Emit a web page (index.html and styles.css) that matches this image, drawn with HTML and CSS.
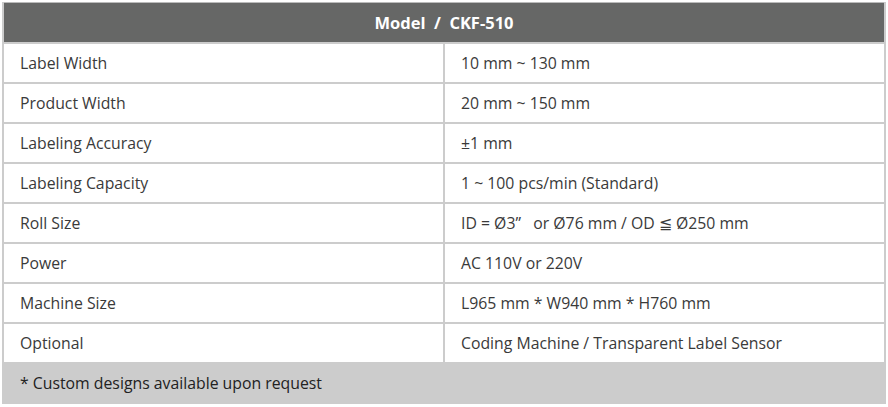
FILE: index.html
```html
<!DOCTYPE html>
<html>
<head>
<meta charset="utf-8">
<link rel="stylesheet" href="styles.css">
</head>
<body>
<div class="wrap">
<table class="spec">
  <thead>
    <tr><th colspan="2">Model&nbsp; / &nbsp;CKF-510</th></tr>
  </thead>
  <tbody>
    <tr><td>Label Width</td><td>10 mm ~ 130 mm</td></tr>
    <tr><td>Product Width</td><td>20 mm ~ 150 mm</td></tr>
    <tr><td>Labeling Accuracy</td><td>±1 mm</td></tr>
    <tr><td>Labeling Capacity</td><td>1 ~ 100 pcs/min (Standard)</td></tr>
    <tr><td>Roll Size</td><td>ID = Ø3”&nbsp;&nbsp; or Ø76 mm / OD ≦ Ø250 mm</td></tr>
    <tr><td>Power</td><td>AC 110V or 220V</td></tr>
    <tr><td>Machine Size</td><td>L965 mm * W940 mm * H760 mm</td></tr>
    <tr><td>Optional</td><td>Coding Machine / Transparent Label Sensor</td></tr>
    <tr class="foot"><td colspan="2">* Custom designs available upon request</td></tr>
  </tbody>
</table>
</div>
</body>
</html>
```
FILE: styles.css
```css
html, body {
  margin: 0;
  padding: 0;
  background: #ffffff;
}
.wrap {
  padding: 2px 2px 0 2px;
}
.spec {
  width: 884px;
  border-collapse: collapse;
  font-family: "Open Sans", "Noto Sans", sans-serif;
  font-size: 15.8px;
  color: #3a3a3a;
  table-layout: fixed;
}
.spec th {
  background: #666766;
  color: #ffffff;
  font-weight: 700;
  font-size: 16.5px;
  height: 39px;
  padding: 0;
  text-align: center;
  border: 2px solid #cccccc;
  border-top: 1px solid #bbbbbb;
}
.spec td {
  height: 38px;
  padding: 0 0 0 16px;
  border: 2px solid #cccccc;
  vertical-align: middle;
}
.spec td:first-child {
  width: 424px;
}
.spec .foot td {
  background: #cccccc;
  color: #222222;
  padding-left: 16px;
}
```
